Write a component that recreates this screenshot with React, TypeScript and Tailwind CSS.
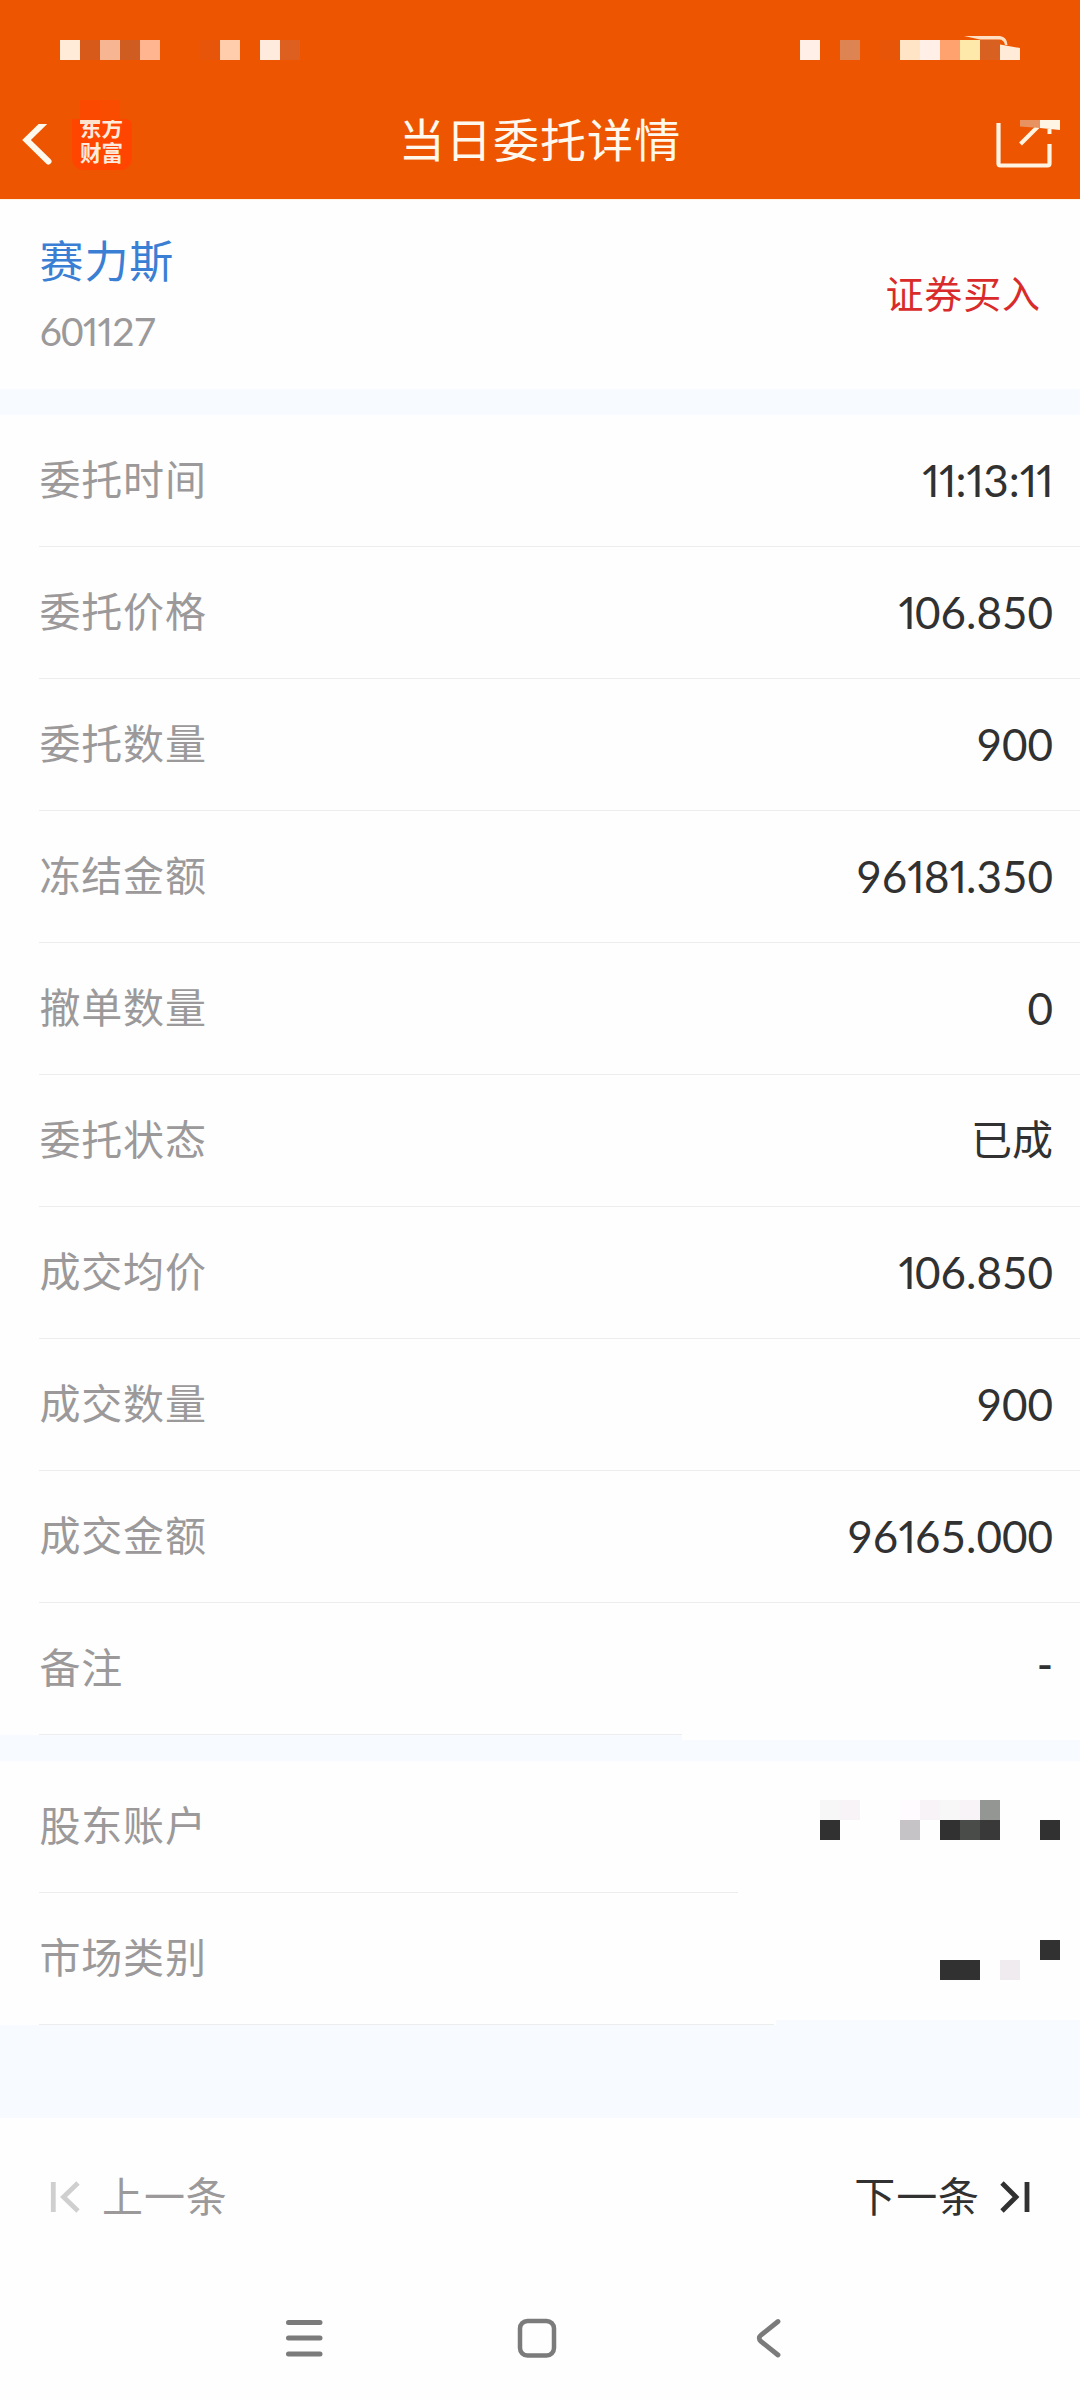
import React from "react";

const LATIN = "font-['Lato','Noto_Sans_CJK_SC',sans-serif]";
const CJK = "font-['Noto_Sans_CJK_SC',sans-serif]";

// Row of 20px blocks; an empty entry leaves a gap.
function Blocks({ colors }: { colors: string[] }) {
  return (
    <div className="flex">
      {colors.map((c, i) => (
        <div key={i} className={`h-5 w-5 ${c}`} />
      ))}
    </div>
  );
}

function StatusBar() {
  return (
    <div className="flex h-[84px] items-start justify-between pl-[60px] pr-[60px] pt-10">
      <Blocks
        colors={[
          "bg-[#ffebd8]", "bg-[#d85a1b]", "bg-[#f7b592]", "bg-[#cf5d22]", "bg-[#ffb690]", "", "",
          "bg-[#e6550a]", "bg-[#ffcdac]", "", "bg-[#ffebde]", "bg-[#de6020]",
        ]}
      />
      <div className="relative">
        <Blocks
          colors={[
            "bg-[#ffefe7]", "", "bg-[#de8452]", "", "bg-[#e65508]", "bg-[#ffe5c5]", "bg-[#ffefe7]",
            "bg-[#ffa26d]", "bg-[#ffe9aa]", "bg-[#d86020]", "",
          ]}
        />
        <svg className="absolute right-0 -top-5" width="60" height="40" viewBox="960 20 60 40">
          <path d="M964 36H1000Q1007 37 1007.500 45H1005Q1004 39.500 999 39.500H980Z" fill="#ffe0c4" />
          <path d="M1000 44.500L1020 48V60H1000Z" fill="#ffebd8" />
        </svg>
      </div>
    </div>
  );
}

function AppLogo() {
  return (
    <div className="relative h-[70px] w-[60px]">
      <div className="absolute inset-x-0 bottom-0 h-[51px] rounded-b-[12px] rounded-tr-[6px] bg-[#ff4500]" />
      <div className={`absolute left-2 top-[14px] whitespace-pre text-[21.500px] font-bold leading-[25px] text-[#ffeadb] ${CJK}`}>
        {"东方\n财富"}
      </div>
      <div className="absolute left-2 top-0 h-5 w-5 bg-[#fb4900]" />
      <div className="absolute left-7 top-0 h-5 w-5 bg-[#f94c00]" />
      <div className="absolute left-2 top-5 h-1 w-5 bg-[#ffe2cc]" />
    </div>
  );
}

function Header() {
  return (
    <header className="h-[200px] border-b border-[#fff3df] bg-[#ed5500]">
      <StatusBar />
      <div className="flex h-[114px] items-start justify-between">
        <div className="flex w-[300px] items-start pt-4">
          <svg width="72" height="70" viewBox="0 100 72 70" fill="none">
            <clipPath id="back">
              <rect x="0" y="124" width="72" height="46" />
            </clipPath>
            <path d="M47 120L26.500 140L48.500 161.500" stroke="#fff8ec" strokeWidth="6" strokeLinecap="round" clipPath="url(#back)" />
          </svg>
          <AppLogo />
        </div>
        <h1 className={`pt-[19px] text-[46px] leading-[68px] tracking-[1.100px] text-[#fff8ec] ${CJK}`}>当日委托详情</h1>
        <div className="flex w-[300px] justify-end pr-5 pt-9">
          <svg width="70" height="52" viewBox="990 120 70 52" fill="none">
            <path d="M998.500 123V163.500Q998.500 165.500 1000.500 165.500H1047.500Q1049.500 165.500 1049.500 163.500V144" stroke="#fff3e2" strokeWidth="4.200" />
            <path d="M1020.500 144L1038 126.500" stroke="#fff3e2" strokeWidth="4" />
            <path d="M1047.500 129H1051.500V134H1047.500Z" fill="#fff3e2" />
            <path d="M1020 120H1040V128L1020 126.500Z" fill="#e89262" />
            <path d="M1040 120H1060V130L1040 128Z" fill="#fff5e4" />
          </svg>
        </div>
      </div>
    </header>
  );
}

// Even-width numerals, with the narrow form of "1".
function Digits({ text }: { text: string }) {
  return (
    <>
      {text.split(/(1+)/).map((part, i) =>
        part.startsWith("1") ? (
          <span key={i} className="tracking-[-0.800px] [font-feature-settings:'pnum']">
            {part}
          </span>
        ) : (
          part
        ),
      )}
    </>
  );
}

function Row({ label, value, line = "w-[1041px]" }: { label: string; value: React.ReactNode; line?: string }) {
  return (
    <div className="flex h-[132px] flex-col">
      <div className="flex h-[131px] items-center justify-between pl-[39.500px] pr-[27px]">
        <span className={`pb-[7px] text-[41px] leading-[60px] tracking-[0.800px] text-[#9b999a] ${CJK}`}>{label}</span>
        {value}
      </div>
      <div className={`ml-[39px] h-px bg-[#ededed] ${line}`} />
    </div>
  );
}

function Value({ text }: { text: string }) {
  return (
    <span className={`pb-[1px] text-[44px] leading-[60px] text-[#313131] ${LATIN}`}>
      <Digits text={text} />
    </span>
  );
}

const rows = [
  ["委托时间", "11:13:11"],
  ["委托价格", "106.850"],
  ["委托数量", "900"],
  ["冻结金额", "96181.350"],
  ["撤单数量", "0"],
  ["委托状态", "已成"],
  ["成交均价", "106.850"],
  ["成交数量", "900"],
  ["成交金额", "96165.000"],
];

export default function App() {
  return (
    <div className="flex h-[2400px] w-[1080px] flex-col overflow-hidden bg-[#fefefe]">
      <Header />

      <section className="flex h-[189px] justify-between pl-[39.500px] pr-[39px]">
        <div className="flex flex-col">
          <span className={`mt-[27px] text-[44px] leading-[64px] tracking-[0.900px] text-[#3b7fd4] ${CJK}`}>赛力斯</span>
          <span className={`mt-[16px] text-[39px] leading-[48px] tracking-[-1px] text-[#9b999a] ${LATIN}`}>
            <Digits text="601127" />
          </span>
        </div>
        <span className={`mt-[64px] text-[38px] leading-[56px] tracking-[0.900px] text-[#d92b2b] ${CJK}`}>证券买入</span>
      </section>

      <div className="h-[26px] bg-[#f7fbff]" />

      <section>
        {rows.map(([label, value], i) => (
          <Row
            key={i}
            label={label}
            value={
              value === "已成" ? (
                <span className={`pb-[7px] text-[41px] leading-[60px] text-[#313131] ${CJK}`}>{value}</span>
              ) : (
                <Value text={value} />
              )
            }
          />
        ))}
        <Row label="备注" value={<span className={`pb-[9px] text-[44px] font-medium leading-[60px] text-[#313131] ${LATIN}`}>-</span>} line="w-[643px]" />
      </section>

      <div className="relative h-[26px] bg-[#f7fbff]">
        <div className="absolute right-0 top-0 h-[5px] w-[398px] bg-[#fefefe]" />
      </div>

      <section>
        <Row
          label="股东账户"
          line="w-[699px]"
          value={
            <div className="-mr-[7px] -mt-[13px] flex flex-col">
              <Blocks
                colors={["bg-[#f7f7f7]", "bg-[#f7f3f7]", "", "", "bg-[#fffbff]", "bg-[#f7f3f7]", "bg-[#f7f7f7]", "bg-[#f7f3f7]", "bg-[#949694]", "", "", ""]}
              />
              <Blocks
                colors={["bg-[#313131]", "", "", "", "bg-[#c5c3c5]", "", "bg-[#313131]", "bg-[#4a4c4a]", "bg-[#393939]", "", "", "bg-[#313131]"]}
              />
            </div>
          }
        />
        <Row
          label="市场类别"
          line="w-[735px]"
          value={
            <div className="-mr-[7px] mt-[2px] flex flex-col">
              <Blocks colors={["", "", "", "", "", "bg-[#313131]"]} />
              <Blocks colors={["bg-[#313131]", "bg-[#313131]", "", "bg-[#efebef]", "", ""]} />
            </div>
          }
        />
      </section>

      <div className="relative h-[93px] bg-[#f7fbff]">
        <div className="absolute -top-[5px] right-0 h-[5px] w-[304px] bg-[#f7fbff]" />
      </div>

      <nav className="flex h-[158px] items-center justify-between pl-[50px] pr-[50px]">
        <div className="flex items-center gap-[21px]">
          <svg width="31" height="32" viewBox="0 0 31 32" fill="none" stroke="#cfcfcf" strokeWidth="4.800">
            <path d="M3.300 1V31M28 2L13.500 16L28 30" />
          </svg>
          <span className={`pb-[6px] text-[41px] leading-[60px] tracking-[0.900px] text-[#9b999a] ${CJK}`}>上一条</span>
        </div>
        <div className="flex items-center gap-[19px]">
          <span className={`pb-[6px] text-[41px] leading-[60px] tracking-[0.900px] text-[#313131] ${CJK}`}>下一条</span>
          <svg width="31" height="32" viewBox="0 0 31 32" fill="none" stroke="#313131" strokeWidth="4.800">
            <path d="M28 1V31M3 2L17 16L3 30" />
          </svg>
        </div>
      </nav>

      <div className="flex flex-1 items-start pl-[286px] pt-[42px]">
        <svg width="37" height="40" viewBox="0 0 37 40" stroke="#7b7b7b" strokeWidth="5" strokeLinecap="round">
          <path d="M2.500 4.500H34M2.500 20H34M2.500 36H34" />
        </svg>
        <svg className="ml-[194px]" width="40" height="40" viewBox="0 0 40 40" fill="none" stroke="#7b7b7b" strokeWidth="4.500">
          <rect x="3" y="3" width="34" height="34.500" rx="7.500" />
        </svg>
        <svg className="ml-[199px]" width="25" height="40" viewBox="0 0 25 40" fill="none" stroke="#7b7b7b" strokeWidth="4.800" strokeLinecap="round">
          <path d="M22 3.500L5 17Q1.500 20 5 23.500L22 37" />
        </svg>
      </div>
    </div>
  );
}
